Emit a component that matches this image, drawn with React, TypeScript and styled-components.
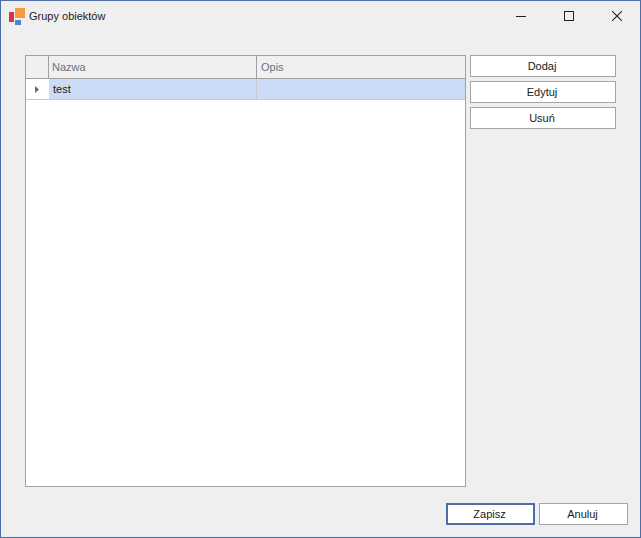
import styled, { createGlobalStyle } from "styled-components";

const GlobalStyle = createGlobalStyle`
    html, body {
        margin: 0;
        padding: 0;
        background: #efefef;
    }
    * {
        box-sizing: border-box;
    }
`;

const Window = styled.div`
    width: 641px;
    height: 538px;
    display: flex;
    flex-direction: column;
    background: #efefef;
    border: 1px solid #4a6ea5;
    font-family: "Liberation Sans", Arial, sans-serif;
    font-size: 11px;
    color: #1a1a1a;
`;

const TitleBar = styled.div`
    height: 30px;
    display: flex;
    align-items: center;
    padding-left: 8px;
    flex-shrink: 0;
`;

const Title = styled.span`
    margin-left: 3px;
    margin-top: -1px;
    flex: 1;
    color: #222;
`;

const Controls = styled.div`
    display: flex;
    margin-right: -1px;
`;

const ControlButton = styled.div`
    width: 48px;
    height: 30px;
    display: flex;
    align-items: center;
    justify-content: center;
`;

const Body = styled.div`
    flex: 1;
    display: flex;
    flex-direction: column;
    padding: 24px 12px 12px 24px;
`;

const Main = styled.div`
    display: flex;
    gap: 4px;
`;

const Grid = styled.div`
    width: 441px;
    height: 432px;
    border: 1px solid #a0a0a0;
    background: #fff;
    display: flex;
    flex-direction: column;
`;

const HeaderRow = styled.div`
    display: grid;
    grid-template-columns: 23px 208px 1fr;
    height: 23px;
    background: #f0f0f0;
    border-bottom: 1px solid #a0a0a0;
`;

const HeaderCell = styled.div`
    border-right: 1px solid #a0a0a0;
    color: #6f7080;
    padding: 0 0 1px 3px;
    display: flex;
    align-items: center;
    &:last-child {
        border-right: none;
        padding-left: 4px;
    }
`;

const DataRow = styled.div`
    display: grid;
    grid-template-columns: 23px 208px 1fr;
    height: 21px;
    border-bottom: 1px solid #c8c8c8;
`;

const RowHead = styled.div`
    background: #fff;
    display: flex;
    align-items: center;
    justify-content: center;
    padding-right: 2px;
`;

const Cell = styled.div`
    background: #cddcf6;
    border-right: 1px solid #c4c8cf;
    padding: 0 0 1px 4px;
    display: flex;
    align-items: center;
    &:last-child {
        border-right: none;
    }
`;

const SideButtons = styled.div`
    width: 146px;
    display: flex;
    flex-direction: column;
    gap: 4px;
`;

const Button = styled.button<{ $primary?: boolean }>`
    height: 22px;
    padding: 0 2px 1px 0;
    background: #fff;
    border: ${(p) => (p.$primary ? "2px solid #4a6ea5" : "1px solid #a5a5a5")};
    font: inherit;
    color: #1a1a1a;
`;

const Footer = styled.div`
    margin-top: 16px;
    display: flex;
    justify-content: flex-end;
    gap: 4px;
    ${Button} {
        width: 89px;
    }
`;

const AppIcon = () => (
    <svg width="17" height="17" viewBox="0 0 17 17">
        <rect x="0" y="4" width="5" height="10" fill="#d8334a" />
        <rect x="6" y="0" width="10" height="10" fill="#f59a40" />
        <rect x="6" y="12" width="6" height="5" fill="#4a86c8" />
    </svg>
);

export default function App() {
    return (
        <>
            <GlobalStyle />
            <Window>
                <TitleBar>
                    <AppIcon />
                    <Title>Grupy obiektów</Title>
                    <Controls>
                        <ControlButton>
                            <svg width="10" height="10" viewBox="0 0 10 10">
                                <rect x="0" y="5" width="10" height="1" fill="#222" />
                            </svg>
                        </ControlButton>
                        <ControlButton>
                            <svg width="10" height="10" viewBox="0 0 10 10">
                                <rect x="0.5" y="0.5" width="9" height="9" fill="none" stroke="#222" />
                            </svg>
                        </ControlButton>
                        <ControlButton>
                            <svg width="10" height="10" viewBox="0 0 10 10">
                                <path d="M0 0L10 10M10 0L0 10" stroke="#222" strokeWidth="1.1" />
                            </svg>
                        </ControlButton>
                    </Controls>
                </TitleBar>
                <Body>
                    <Main>
                        <Grid>
                            <HeaderRow>
                                <HeaderCell />
                                <HeaderCell>Nazwa</HeaderCell>
                                <HeaderCell>Opis</HeaderCell>
                            </HeaderRow>
                            <DataRow>
                                <RowHead>
                                    <svg width="4" height="7" viewBox="0 0 4 7">
                                        <path d="M0 0L4 3.5L0 7Z" fill="#6a6a6a" />
                                    </svg>
                                </RowHead>
                                <Cell>test</Cell>
                                <Cell />
                            </DataRow>
                        </Grid>
                        <SideButtons>
                            <Button>Dodaj</Button>
                            <Button>Edytuj</Button>
                            <Button>Usuń</Button>
                        </SideButtons>
                    </Main>
                    <Footer>
                        <Button $primary>Zapisz</Button>
                        <Button>Anuluj</Button>
                    </Footer>
                </Body>
            </Window>
        </>
    );
}
